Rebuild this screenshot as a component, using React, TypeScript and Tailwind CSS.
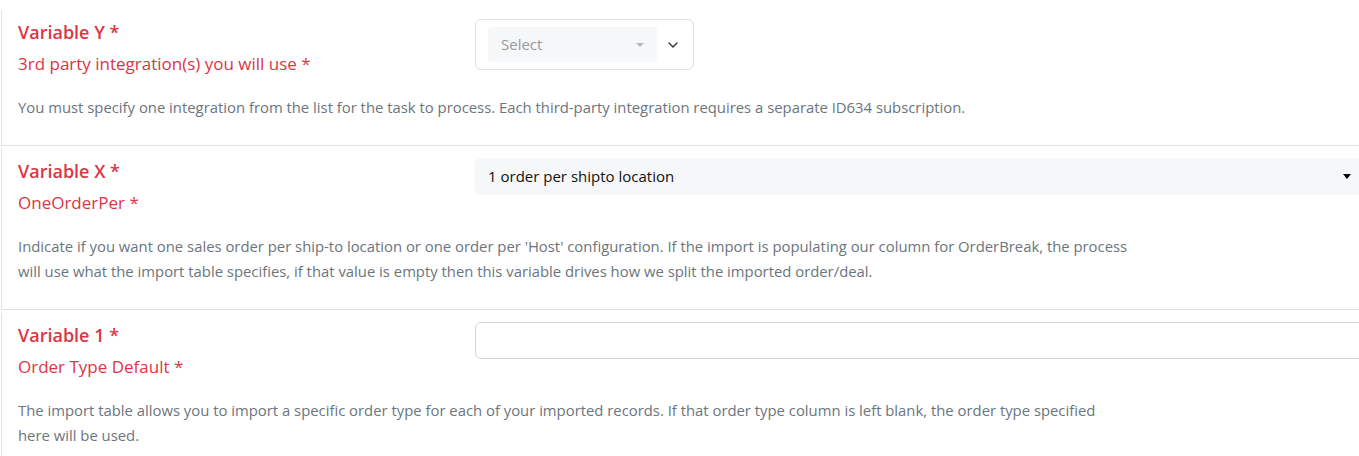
import React from "react"

type Row = {
  title: string
  label: string
  desc: string[]
  kind: "multi" | "select" | "input"
}

const rows: Row[] = [
  {
    title: "Variable Y *",
    label: "3rd party integration(s) you will use *",
    desc: [
      "You must specify one integration from the list for the task to process. Each third-party integration requires a separate ID634 subscription.",
    ],
    kind: "multi",
  },
  {
    title: "Variable X *",
    label: "OneOrderPer *",
    desc: [
      "Indicate if you want one sales order per ship-to location or one order per 'Host' configuration. If the import is populating our column for OrderBreak, the process",
      "will use what the import table specifies, if that value is empty then this variable drives how we split the imported order/deal.",
    ],
    kind: "select",
  },
  {
    title: "Variable 1 *",
    label: "Order Type Default *",
    desc: [
      "The import table allows you to import a specific order type for each of your imported records. If that order type column is left blank, the order type specified",
      "here will be used.",
    ],
    kind: "input",
  },
]

const Control: React.FC<{ kind: Row["kind"] }> = ({ kind }) => {
  if (kind === "multi") {
    return (
      <div className="w-[219px] h-[51px] border border-[#dcdfe3] rounded-md flex items-center pl-[12px] pr-[14px]">
        <div className="w-[169px] h-[35px] bg-[#f6f7f9] rounded flex items-center justify-between pl-[13px] pr-[13px]">
          <span className="text-[15px] text-[#9a9a9a]">Select</span>
          <span className="w-0 h-0 border-l-[4px] border-r-[4px] border-t-[4px] border-l-transparent border-r-transparent border-t-[#b5b5b5]" />
        </div>
        <svg className="ml-auto" width="12" height="12" viewBox="0 0 12 12" fill="none">
          <path d="M2 4l4 4 4-4" stroke="#333" strokeWidth="1.4" strokeLinecap="round" strokeLinejoin="round" />
        </svg>
      </div>
    )
  }
  if (kind === "select") {
    return (
      <div className="w-[890px] h-[37px] bg-[#f6f7f9] rounded-md flex items-center pl-[13px] pr-[12px]">
        <span className="text-[15px] text-[#111]">1 order per shipto location</span>
        <span className="ml-auto mr-[2px] w-0 h-0 border-l-[4px] border-r-[4px] border-t-[5px] border-l-transparent border-r-transparent border-t-black" />
      </div>
    )
  }
  return <div className="w-[890px] h-[37px] border border-[#ced4da] rounded-md bg-white" />
}

export default function App() {
  return (
    <div className="w-full h-[456px] overflow-hidden bg-white" style={{ fontFamily: '"Open Sans", "Noto Sans", sans-serif' }}>
      <div className="w-[1400px] ml-px pt-[10px]">
        {rows.map((r) => (
          <div key={r.title} className="border-l border-b border-[#dee2e6] mb-[3px] pl-[16px] pt-[9px] pb-[25px]">
            <div className="flex">
              <div className="w-[457px]">
                <div className="text-[18px] leading-[26px] font-semibold text-[#dc3545]">{r.title}</div>
                <div className="mt-[7px] text-[17px] leading-[24px] text-[#dc3545]">{r.label}</div>
              </div>
              <div>
                <Control kind={r.kind} />
              </div>
            </div>
            <div className="mt-[19px] text-[14.85px] leading-[25px] text-[#6c757d]">
              {r.desc.map((line) => (
                <div key={line} className="whitespace-nowrap">{line}</div>
              ))}
            </div>
          </div>
        ))}
      </div>
    </div>
  )
}
